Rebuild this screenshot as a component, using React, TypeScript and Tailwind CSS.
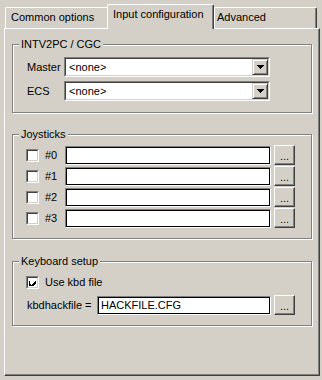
import React from 'react'

const sunken = 'border border-t-[#808080] border-l-[#808080] border-b-white border-r-white'

const Group = ({ title, className, children }: { title: string; className: string; children: React.ReactNode }) => (
  <div className={`relative mx-[7px] border border-[#808080] shadow-[inset_1px_1px_0_#fff,1px_1px_0_#fff] ${className}`}>
    <span className="absolute -top-[8px] left-[6px] bg-[#d4d0c8] px-[2px] leading-[14px]">{title}</span>
    {children}
  </div>
)

const Checkbox = ({ checked }: { checked?: boolean }) => (
  <div className={`h-[13px] w-[13px] shrink-0 ${sunken}`}>
    <div className="flex h-full w-full items-center justify-center border border-t-[#404040] border-l-[#404040] border-b-[#d4d0c8] border-r-[#d4d0c8] bg-white">
      {checked && (
        <svg width="7" height="7" viewBox="0 0 7 7" shapeRendering="crispEdges">
          <path d="M0 2h1v3h1v1h1v-1h1v-1h1v-1h1v-1h1v3h-1v1h-1v1h-1v1h-1v1h-1v-1h-1v-1h-1z" fill="#000" />
        </svg>
      )}
    </div>
  </div>
)

const TextField = ({ width, value }: { width: string; value?: string }) => (
  <div className={`h-[19px] shrink-0 ${sunken} ${width}`}>
    <div className="h-full w-full border border-black bg-white pl-[2px] leading-[15px]">{value}</div>
  </div>
)

const Browse = () => (
  <button className="ml-[3px] flex h-[20px] w-[21px] shrink-0 items-end justify-center border border-t-white border-l-white border-b-[#404040] border-r-[#404040] bg-[#d4d0c8] pb-[3px] leading-[10px] shadow-[inset_-1px_-1px_0_#808080]">
    ...
  </button>
)

const Combo = ({ value }: { value: string }) => (
  <div className={`h-[20px] w-[206px] ${sunken}`}>
    <div className="flex h-full w-full items-center border border-t-[#404040] border-l-[#404040] border-b-[#d4d0c8] border-r-[#d4d0c8] bg-white">
      <span className="flex-1 pl-[3px]">{value}</span>
      <div className="flex h-[16px] w-[16px] items-center justify-center border border-t-[#d4d0c8] border-l-[#d4d0c8] border-b-[#404040] border-r-[#404040] bg-[#d4d0c8] shadow-[inset_1px_1px_0_#fff,inset_-1px_-1px_0_#808080]">
        <svg width="7" height="4" viewBox="0 0 7 4" shapeRendering="crispEdges">
          <path d="M0 0h7v1h-1v1h-1v1h-1v1h-1v-1h-1v-1h-1v-1h-1z" fill="#000" />
        </svg>
      </div>
    </div>
  </div>
)

export default function App() {
  return (
    <div
      className="h-[380px] w-[322px] bg-[#d4d0c8] text-[11px] text-black"
      style={{ fontFamily: '"Liberation Sans", Arial, sans-serif' }}
    >
      <div className="flex h-[28px] items-end pl-[5px]">
        <div className="h-[21px] w-[102px] rounded-tl-[2px] border-l border-t border-white pl-[5px] leading-[18px]">
          Common options
        </div>
        <div className="relative z-10 -mb-px h-[25px] w-[107px] rounded-t-[2px] border-l border-r border-t border-l-white border-t-white border-r-[#404040] bg-[#d4d0c8] pl-[5px] leading-[18px] shadow-[inset_-1px_0_0_#808080]">
          Input configuration
        </div>
        <div className="h-[21px] w-[103px] rounded-t-[2px] border-l border-r border-t border-l-white border-t-white border-r-[#404040] pl-[2px] leading-[18px] shadow-[inset_-1px_0_0_#808080]">
          Advanced
        </div>
      </div>
      <div className="ml-[4px] h-[348px] w-[316px] border-b border-l border-r border-t border-b-[#404040] border-l-white border-r-[#404040] border-t-white pt-[15px] shadow-[inset_-1px_-1px_0_#808080]">
        <Group title="INTV2PC / CGC" className="h-[69px] pt-[12px]">
          <div className="flex flex-col gap-[4px] pl-[14px]">
            <div className="flex items-center">
              <span className="w-[37px]">Master</span>
              <Combo value="<none>" />
            </div>
            <div className="flex items-center">
              <span className="w-[37px]">ECS</span>
              <Combo value="<none>" />
            </div>
          </div>
        </Group>
        <Group title="Joysticks" className="mt-[21px] h-[105px] pt-[10px]">
          <div className="flex flex-col gap-[1px] pl-[13px]">
            {['#0', '#1', '#2', '#3'].map((j) => (
              <div key={j} className="flex h-[20px] items-center">
                <Checkbox />
                <span className="ml-[6px] w-[20px]">{j}</span>
                <TextField width="w-[206px]" />
                <Browse />
              </div>
            ))}
          </div>
        </Group>
        <Group title="Keyboard setup" className="mt-[22px] h-[65px] pt-[10px]">
          <div className="flex h-[20px] items-center pl-[13px]">
            <Checkbox checked />
            <span className="ml-[6px]">Use kbd file</span>
          </div>
          <div className="mt-[3px] flex h-[20px] items-center pl-[14px]">
            <span className="w-[70px]">kbdhackfile =</span>
            <TextField width="w-[174px]" value="HACKFILE.CFG" />
            <Browse />
          </div>
        </Group>
      </div>
    </div>
  )
}
